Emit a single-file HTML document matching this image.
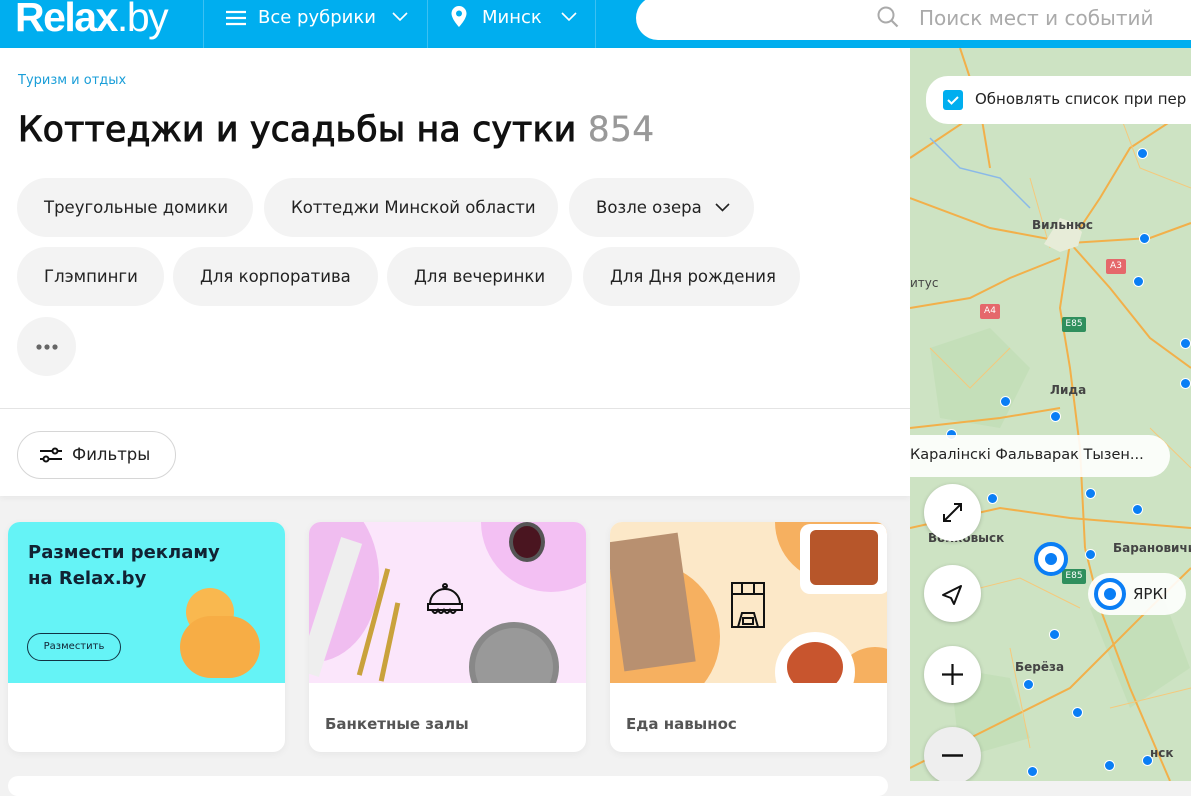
<!DOCTYPE html>
<html><head><meta charset="utf-8"><style>
*{box-sizing:border-box;margin:0;padding:0}
body{width:1191px;height:781px;overflow:hidden;background:#f2f2f2;font-family:"DejaVu Sans","Liberation Sans",sans-serif;position:relative}
.hdr{position:absolute;left:0;top:0;width:1191px;height:48px;background:#00aeef;color:#fff}
.logo{position:absolute;left:15px;top:-6px;font-size:41px;letter-spacing:-1.5px;font-family:"Liberation Sans",sans-serif}
.logo b{font-weight:bold}
.sep{position:absolute;top:0;width:1px;height:48px;background:#3cc0f2}
.nav{position:absolute;top:7px;font-size:18px}
.search{position:absolute;left:636px;top:-4px;width:600px;height:44px;background:#fff;border-radius:22px}
.search span{position:absolute;left:283px;top:10px;font-size:20px;color:#aaa}
.left{position:absolute;left:0;top:48px;width:910px;height:448px;background:#fff;box-shadow:0 2px 6px rgba(0,0,0,.05)}
.crumb{position:absolute;left:18px;top:25px;font-size:13px;color:#1a9ed8}
h1{position:absolute;left:18px;top:62px;font-size:34.5px;font-weight:normal;color:#111;-webkit-text-stroke:1px #111;letter-spacing:0.3px}
h1 span{color:#999;-webkit-text-stroke:0.3px #999}
.chip{position:absolute;height:59px;border-radius:30px;background:#f3f3f3;font-size:16.5px;color:#222;line-height:59px;padding:0 27px;white-space:nowrap}
.div{position:absolute;left:0;top:360px;width:910px;height:1px;background:#e4e4e4}
.filt{position:absolute;left:17px;top:383px;width:159px;height:48px;border:1px solid #d6d6d6;border-radius:24px;font-size:16.5px;line-height:46px;padding-left:54px;color:#222}
.card{position:absolute;top:522px;width:277px;height:230px;background:#fff;border-radius:12px;overflow:hidden;box-shadow:0 2px 8px rgba(0,0,0,.05)}
.card .im{height:161px;position:relative;overflow:hidden}
.card .t{position:absolute;left:16px;top:193px;font-size:15px;font-weight:bold;color:#555}
.map{position:absolute;left:910px;top:48px;width:281px;height:733px;background:#cde3c3;overflow:hidden}
.pill{position:absolute;background:rgba(255,255,255,.9);border-radius:22px}
.btn{position:absolute;left:14px;width:57px;height:57px;border-radius:50%;background:#fff;box-shadow:0 1px 4px rgba(0,0,0,.2)}
.dot{position:absolute;width:11px;height:11px;border-radius:50%;background:#0a7ef5;border:1.5px solid #fff}
.lbl{position:absolute;font-size:12px;font-weight:bold;color:#444}
</style></head><body>
<div class="hdr">
 <div class="logo"><b>Relax</b>.by</div>
 <div class="sep" style="left:203px"></div>
 <svg style="position:absolute;left:226px;top:10px" width="20" height="16"><path d="M0 2h20M0 8h20M0 14h20" stroke="#fff" stroke-width="2.2"/></svg>
 <div class="nav" style="left:258px">Все рубрики</div>
 <svg style="position:absolute;left:392px;top:12px" width="16" height="10"><path d="M1 1l7 7 7-7" stroke="#fff" stroke-width="1.6" fill="none"/></svg>
 <div class="sep" style="left:427px"></div>
 <svg style="position:absolute;left:451px;top:6px" width="16" height="22"><path d="M8 0a7.5 7.5 0 0 0-7.5 7.5C.5 13 8 21 8 21s7.5-8 7.5-13.5A7.5 7.5 0 0 0 8 0z" fill="#fff"/><circle cx="8" cy="7.5" r="3" fill="#00aeef"/></svg>
 <div class="nav" style="left:482px">Минск</div>
 <svg style="position:absolute;left:561px;top:12px" width="16" height="10"><path d="M1 1l7 7 7-7" stroke="#fff" stroke-width="1.6" fill="none"/></svg>
 <div class="sep" style="left:595px"></div>
 <div class="search"><svg style="position:absolute;left:240px;top:9px" width="24" height="24"><circle cx="10" cy="10" r="7.5" stroke="#aaa" stroke-width="2" fill="none"/><path d="M15.5 15.5l6 6" stroke="#aaa" stroke-width="2.2"/></svg><span>Поиск мест и событий</span></div>
</div>
<div class="left">
 <div class="crumb">Туризм и отдых</div>
 <h1>Коттеджи и усадьбы на сутки <span>854</span></h1>
 <div class="chip" style="left:17px;top:130px;width:236px">Треугольные домики</div>
 <div class="chip" style="left:264px;top:130px;width:294px">Коттеджи Минской области</div>
 <div class="chip" style="left:569px;top:130px;width:185px">Возле озера<svg style="position:absolute;right:24px;top:25px" width="15" height="9"><path d="M1 1l6.5 6.5L14 1" stroke="#222" stroke-width="1.6" fill="none"/></svg></div>
 <div class="chip" style="left:17px;top:199px;width:147px">Глэмпинги</div>
 <div class="chip" style="left:173px;top:199px;width:205px">Для корпоратива</div>
 <div class="chip" style="left:387px;top:199px;width:185px">Для вечеринки</div>
 <div class="chip" style="left:583px;top:199px;width:217px">Для Дня рождения</div>
 <div class="chip" style="left:17px;top:269px;width:59px;padding:0"><svg style="position:absolute;left:19px;top:27px" width="22" height="6"><circle cx="3" cy="3" r="2.6" fill="#666"/><circle cx="11" cy="3" r="2.6" fill="#666"/><circle cx="19" cy="3" r="2.6" fill="#666"/></svg></div>
 <div class="div"></div>
 <div class="filt"><svg style="position:absolute;left:22px;top:14px" width="22" height="18"><path d="M0 5h13M17 5h5M0 13h4M8 13h14" stroke="#111" stroke-width="2"/><circle cx="15" cy="5" r="2.5" stroke="#111" stroke-width="2" fill="none"/><circle cx="6" cy="13" r="2.5" stroke="#111" stroke-width="2" fill="none"/></svg>Фильтры</div>
</div>
<div class="card" style="left:8px">
 <div class="im" style="background:#65f3f6">
  <div style="position:absolute;left:20px;top:18px;font-size:18px;font-weight:bold;color:#123;line-height:26px">Размести рекламу<br>на Relax.by</div>
  <div style="position:absolute;left:19px;top:111px;width:94px;height:28px;border:1.3px solid #134;border-radius:14px;font-size:10px;text-align:center;line-height:26px;color:#123">Разместить</div>
  <div style="position:absolute;left:178px;top:66px;width:48px;height:48px;border-radius:50%;background:#f9b84f"></div>
  <div style="position:absolute;left:172px;top:94px;width:80px;height:62px;border-radius:40px;background:#f7ad45"></div>
 </div>
</div>
<div class="card" style="left:309px">
 <div class="im" style="background:#fbe6fb">
  <div style="position:absolute;left:-60px;top:-30px;width:130px;height:170px;border-radius:50%;background:#f0bdf0"></div>
  <div style="position:absolute;left:172px;top:-70px;width:140px;height:140px;border-radius:50%;background:#f3c0f3"></div>
  <div style="position:absolute;left:200px;top:0;width:36px;height:40px;border-radius:50%;background:#4a1520;border:4px solid #555"></div>
  <div style="position:absolute;left:160px;top:100px;width:90px;height:90px;border-radius:50%;background:#999;border:6px solid #888"></div>
  <div style="position:absolute;left:10px;top:15px;width:22px;height:140px;background:#eee;transform:rotate(18deg)"></div>
  <div style="position:absolute;left:62px;top:45px;width:5px;height:110px;background:#c9a23c;transform:rotate(15deg)"></div>
  <div style="position:absolute;left:78px;top:80px;width:5px;height:80px;background:#c9a23c;transform:rotate(12deg)"></div>
  <svg style="position:absolute;left:118px;top:60px" width="36" height="42"><path d="M3 22a15 15 0 0 1 30 0zM1 22h34v6H1zM18 4v3M5 28q3 6 6 0q3 6 6 0q3 6 6 0q3 6 6 0" stroke="#111" stroke-width="2" fill="none"/><circle cx="18" cy="4" r="2" fill="none" stroke="#111" stroke-width="2"/></svg>
 </div>
 <div class="t">Банкетные залы</div>
</div>
<div class="card" style="left:610px">
 <div class="im" style="background:#fce8c8">
  <div style="position:absolute;left:-40px;top:40px;width:150px;height:150px;border-radius:50%;background:#f6b060"></div>
  <div style="position:absolute;left:165px;top:-60px;width:120px;height:120px;border-radius:50%;background:#f6b060"></div>
  <div style="position:absolute;left:225px;top:125px;width:80px;height:80px;border-radius:50%;background:#f6b060"></div>
  <div style="position:absolute;left:5px;top:15px;width:72px;height:130px;background:#b89070;transform:rotate(-8deg)"></div>
  <div style="position:absolute;left:190px;top:2px;width:90px;height:70px;border-radius:10px;background:#fff"></div>
  <div style="position:absolute;left:200px;top:8px;width:68px;height:55px;background:#b7562a;border-radius:6px"></div>
  <div style="position:absolute;left:165px;top:110px;width:80px;height:80px;border-radius:50%;background:#fff"></div>
  <div style="position:absolute;left:177px;top:120px;width:56px;height:50px;border-radius:50%;background:#c8552e"></div>
  <svg style="position:absolute;left:118px;top:60px" width="40" height="46"><path d="M4 1h32v44H4zM4 12h32M14 1v11M26 1v11M10 45l4-14h12l4 14M15 36h10v6H15z" stroke="#111" stroke-width="2" fill="none"/></svg>
 </div>
 <div class="t">Еда навынос</div>
</div>
<div style="position:absolute;left:8px;top:776px;width:880px;height:20px;background:#fff;border-radius:12px"></div>
<div class="map">
 <svg width="281" height="733" style="position:absolute;left:0;top:0">
  <g fill="#c4dfb9"><path d="M20 300l60-20 40 40-30 60-60-10zM180 560l70-20 30 80-60 40zM40 620l60 10 20 60-70 20z"/></g>
  <g fill="none" stroke="#f2b04a" stroke-width="2">
   <path d="M0 110L60 70 130 40M0 150L80 180 160 195 240 190 281 175M160 195L150 260 160 320 170 400 175 500M160 195L200 240 240 290 281 320M0 260L60 250 100 230 150 210M0 480L90 460 160 470 281 480M175 500L190 560 220 640 260 733M0 720L80 680 160 640 240 560 281 520M50 0L70 60 80 120M281 60L220 100 190 150 160 195M0 380L90 370 150 360"/>
  </g>
  <g fill="none" stroke="#f5c97c" stroke-width="1">
   <path d="M120 130L140 200M20 300L60 340 100 300M200 40L230 120 281 140M30 550L110 530 170 560M200 660L281 640M100 600L120 700M240 380L281 420"/>
  </g>
  <path d="M20 90L50 120 90 130 120 160" stroke="#8ab9e8" stroke-width="1.5" fill="none"/>
  <path d="M150 170l12 4 10 10-4 14-18 6-16-8z" fill="#e7ecd8"/>
 </svg>
 <div class="lbl" style="left:136px;top:29px;font-weight:normal">Утена</div>
 <div class="lbl" style="left:122px;top:170px">Вильнюс</div>
 <div class="lbl" style="left:140px;top:335px">Лида</div>
 <div class="lbl" style="left:0;top:228px;font-weight:normal">итус</div>
 <div class="lbl" style="left:18px;top:483px">Волковыск</div>
 <div class="lbl" style="left:203px;top:493px">Барановичи</div>
 <div class="lbl" style="left:105px;top:612px">Берёза</div>
 <div class="lbl" style="left:240px;top:698px">нск</div>
 <div style="position:absolute;left:196px;top:211px;width:20px;height:15px;background:#e5686b;border-radius:2px;color:#fff;font-size:9px;text-align:center;line-height:15px">A3</div>
 <div style="position:absolute;left:70px;top:256px;width:20px;height:15px;background:#e5686b;border-radius:2px;color:#fff;font-size:9px;text-align:center;line-height:15px">A4</div>
 <div style="position:absolute;left:152px;top:269px;width:24px;height:15px;background:#2f8f5d;border-radius:2px;color:#fff;font-size:9px;text-align:center;line-height:15px">E85</div>
 <div style="position:absolute;left:152px;top:521px;width:24px;height:15px;background:#2f8f5d;border-radius:2px;color:#fff;font-size:9px;text-align:center;line-height:15px">E85</div>
 <div class="dot" style="left:227px;top:100px"></div><div class="dot" style="left:229px;top:185px"></div><div class="dot" style="left:223px;top:228px"></div>
 <div class="dot" style="left:270px;top:290px"></div><div class="dot" style="left:140px;top:363px"></div><div class="dot" style="left:90px;top:348px"></div>
 <div class="dot" style="left:77px;top:445px"></div><div class="dot" style="left:175px;top:440px"></div><div class="dot" style="left:222px;top:456px"></div>
 <div class="dot" style="left:175px;top:501px"></div><div class="dot" style="left:139px;top:581px"></div><div class="dot" style="left:113px;top:631px"></div>
 <div class="dot" style="left:162px;top:659px"></div><div class="dot" style="left:232px;top:707px"></div><div class="dot" style="left:117px;top:718px"></div>
 <div class="dot" style="left:194px;top:712px"></div><div class="dot" style="left:36px;top:381px"></div><div class="dot" style="left:270px;top:330px"></div>
 <div class="pill" style="left:16px;top:28px;width:290px;height:48px;background:#fff"><div style="position:absolute;left:17px;top:14px;width:20px;height:20px;background:#00aeef;border-radius:3px"><svg width="20" height="20"><path d="M5 10l3.5 3.5L15 7" stroke="#fff" stroke-width="2" fill="none"/></svg></div><span style="position:absolute;left:49px;top:14px;font-size:15px;color:#222;white-space:nowrap">Обновлять список при пер</span></div>
 <div class="pill" style="left:-20px;top:387px;width:280px;height:42px"><span style="position:absolute;left:20px;top:12px;font-size:14.5px;color:#222;white-space:nowrap">Каралінскі Фальварак Тызен...</span></div>
 <div style="position:absolute;left:124px;top:494px;width:34px;height:34px;border-radius:50%;border:4px solid #0a7ef5;background:#fff"><div style="position:absolute;left:7px;top:7px;width:12px;height:12px;border-radius:50%;background:#0a7ef5"></div></div>
 <div class="pill" style="left:178px;top:525px;width:98px;height:42px"><div style="position:absolute;left:6px;top:5px;width:32px;height:32px;border-radius:50%;border:4px solid #0a7ef5;background:#fff"><div style="position:absolute;left:6px;top:6px;width:12px;height:12px;border-radius:50%;background:#0a7ef5"></div></div><span style="position:absolute;left:45px;top:12px;font-size:15px;color:#222">ЯРКI</span></div>
 <div class="btn" style="top:436px"><svg width="57" height="57"><path d="M20 37l17-17M30 20h7v7M20 30v7h7" stroke="#111" stroke-width="2" fill="none"/></svg></div>
 <div class="btn" style="top:517px"><svg width="57" height="57"><path d="M19 30l18-9-7 18-3-6z" stroke="#111" stroke-width="2" fill="none" stroke-linejoin="round"/></svg></div>
 <div class="btn" style="top:598px"><svg width="57" height="57"><path d="M28.5 18v21M18 28.5h21" stroke="#111" stroke-width="2.2"/></svg></div>
 <div class="btn" style="top:679px;background:#eee"><svg width="57" height="57"><path d="M18 28.5h21" stroke="#111" stroke-width="2.5"/></svg></div>
</div>
</body></html>
